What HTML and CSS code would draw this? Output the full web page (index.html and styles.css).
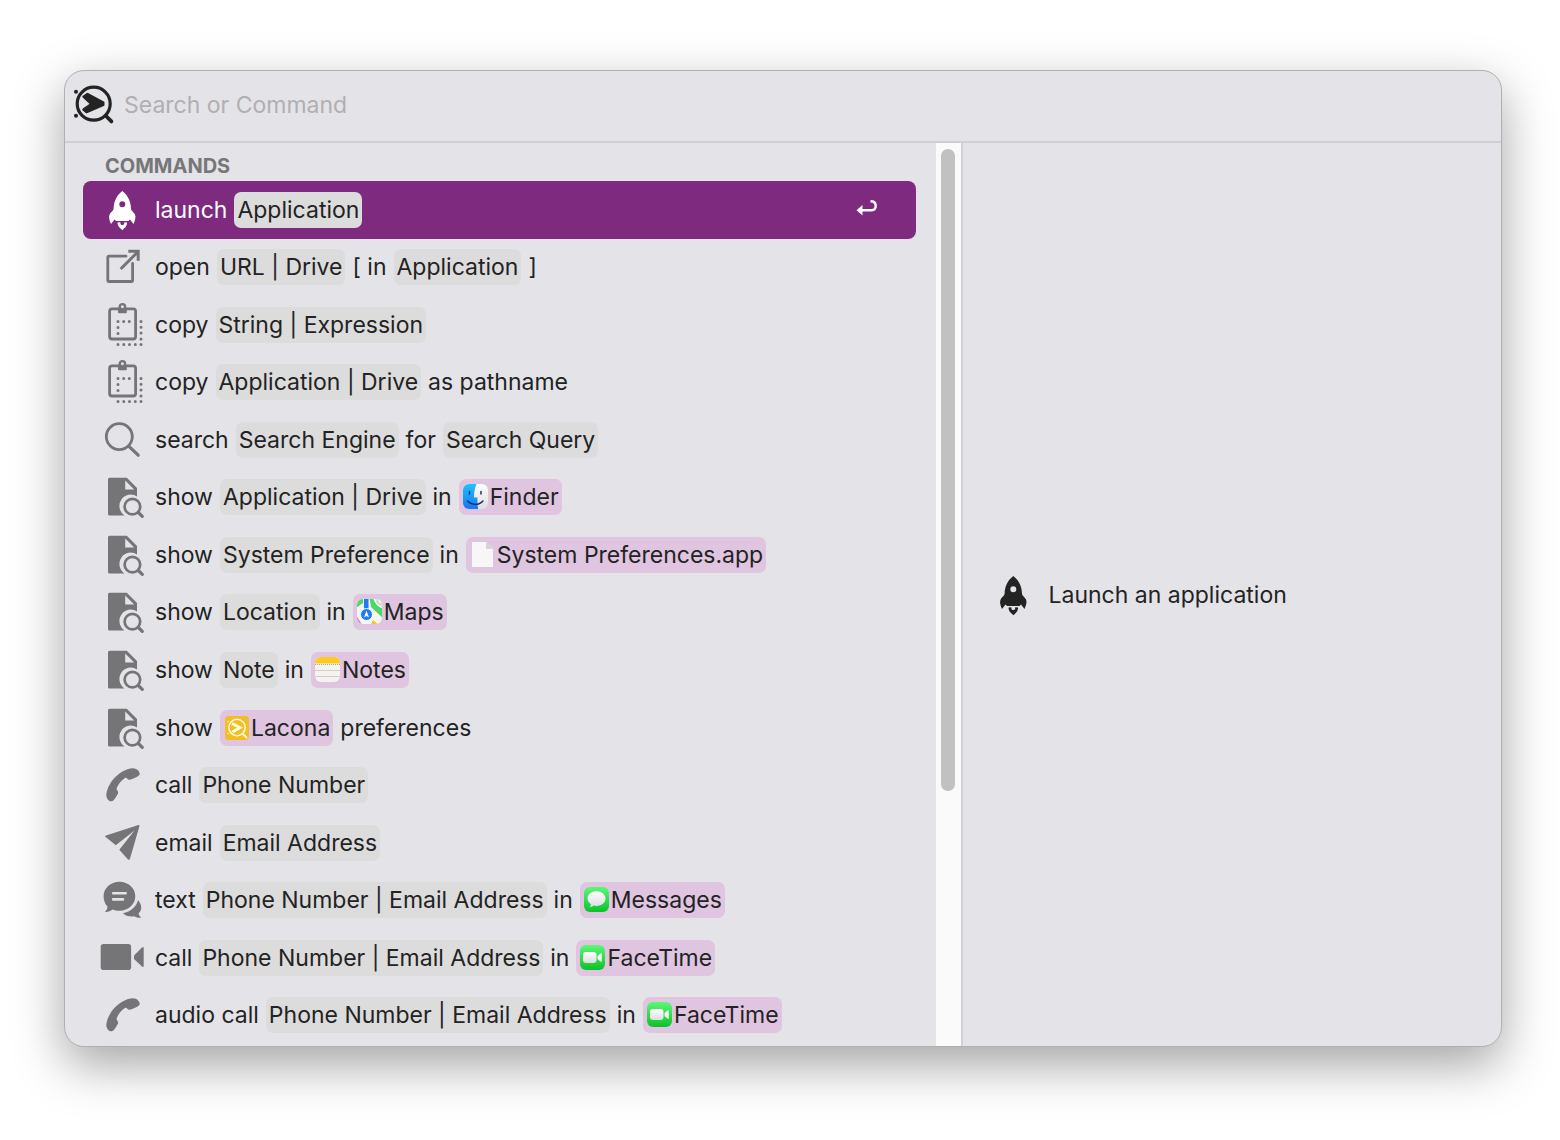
FILE: index.html
```html
<!DOCTYPE html>
<html lang="en">

<head>
  <meta charset="UTF-8">
  <meta name="viewport" content="width=device-width, initial-scale=1.0">
  <title>Lacona</title>
  <link rel="stylesheet" href="styles.css">
</head>

<body>
  <!-- icon definitions -->
  <svg class="sprite" aria-hidden="true">
    <defs>
      <linearGradient id="green" x1="0" y1="0" x2="0" y2="1">
        <stop offset="0" stop-color="#5df777" />
        <stop offset="1" stop-color="#0bc228" />
      </linearGradient>
      <linearGradient id="blue" x1="0" y1="0" x2="0" y2="1">
        <stop offset="0" stop-color="#1fc6fb" />
        <stop offset="1" stop-color="#1c6df2" />
      </linearGradient>
      <linearGradient id="white" x1="0" y1="0" x2="0" y2="1">
        <stop offset="0" stop-color="#ffffff" />
        <stop offset="1" stop-color="#dcdce0" />
      </linearGradient>
      <clipPath id="tile"><rect x="1" y="1" width="25" height="25" rx="6" /></clipPath>
    </defs>

    <symbol id="i-rocket" viewBox="0 0 46 46">
      <path fill="currentColor" fill-rule="evenodd" d="M23.3 4C27.8 7.5 31.8 13 32 21.5C32 24 34.5 24.5 36 27.5C37.2 30.5 36 33.5 34.5 37L31 32.5L29.5 34H17L15.6 32.5L12 37C10.5 33.5 9.4 30.5 10.6 27.5C12 24.5 14.6 24 14.6 21.5C14.8 13 18.8 7.5 23.3 4ZM23.3 14.3A3 3 0 1 0 23.3 20.3A3 3 0 1 0 23.3 14.3Z" />
      <path fill="currentColor" d="M18.5 35.6C18.5 39.5 21 41 23.3 43.2C25.6 41 28.1 39.5 28.1 35.6L25.3 35.2C25.3 37.2 24.6 38 23.3 38C22 38 21.3 37.2 21.3 35.2Z" />
    </symbol>
    <symbol id="i-open" viewBox="0 0 46 46">
      <path fill="none" stroke="currentColor" stroke-width="2.8" stroke-linecap="round" stroke-linejoin="round" d="M27 12.2H10Q8.8 12.2 8.8 13.4V36.3Q8.8 37.5 10 37.5H32.4Q33.6 37.5 33.6 36.3V19.5" />
      <path fill="none" stroke="currentColor" stroke-width="3" d="M21.7 25L39 7.7M29.3 7.3H39.2V16.8" />
    </symbol>
    <symbol id="i-clipboard" viewBox="0 0 46 46">
      <rect x="10.6" y="6.8" width="26" height="30.2" rx="2.5" fill="none" stroke="currentColor" stroke-width="2.8" />
      <rect x="19" y="5.8" width="8.8" height="5.4" rx="1" fill="currentColor" />
      <circle cx="23.4" cy="4.8" r="2.6" fill="none" stroke="currentColor" stroke-width="2.6" />
      <circle class="hole" cx="23.4" cy="4.8" r="1.4" />
      <path fill="none" stroke="currentColor" stroke-width="3" stroke-linecap="round" d="M19 19.5h.01M24.7 19.5h.01M30.3 19.5h.01M19 25.5h.01M19 31.5h.01M42 19.5h.01M42 25.3h.01M42 31.1h.01M42 36.9h.01M42 42.6h.01M19 42.6h.01M24.8 42.6h.01M30.5 42.6h.01M36.3 42.6h.01" />
    </symbol>
    <symbol id="i-search" viewBox="0 0 46 46">
      <circle cx="20.3" cy="19.6" r="13" fill="none" stroke="currentColor" stroke-width="2.8" />
      <path stroke="currentColor" stroke-width="3.2" stroke-linecap="round" d="M30 29.3L39.2 38.2" />
    </symbol>
    <symbol id="i-show" viewBox="0 0 46 46">
      <path fill="currentColor" fill-rule="evenodd" d="M10.5 3.8H27.8L38 14V22.5A11 11 0 0 0 25.5 41.4H10.5Q9 41.4 9 39.9V5.3Q9 3.8 10.5 3.8ZM26.2 6.5V15.5H35.2Z" />
      <circle cx="33.4" cy="32.6" r="7.8" fill="none" stroke="currentColor" stroke-width="2.7" />
      <path stroke="currentColor" stroke-width="3.2" stroke-linecap="round" d="M39.3 38.5L43.3 42.4" />
    </symbol>
    <symbol id="i-phone" viewBox="0 0 46 46">
      <path fill="currentColor" d="M40.5 12.8C41.5 10 38 6.2 34 6.2C27 6.5 18 11.5 12.5 19.5C8.5 25.5 7.3 30.5 7.3 33.5C7.6 37.5 11 40.3 13.6 39C15.5 37.5 17.8 34 19 31.4C19.8 29.5 17.5 28.5 17.6 26.6C19 22.5 22.3 18.3 26.2 15.8C28 15.2 28.5 18 30.5 17.8C34 17 38.5 15.2 40.5 12.8Z" />
    </symbol>
    <symbol id="i-email" viewBox="0 0 46 46">
      <path fill="currentColor" d="M6 16.5Q5.7 15.7 7 15.4L39.5 5Q40.8 4.8 40.4 6.2L30.9 39Q30.2 40.3 29 39.4L20.3 29.8L35.5 10.5L16.8 25.3Z" />
    </symbol>
    <symbol id="i-text" viewBox="0 0 46 46">
      <path fill="currentColor" d="M20.5 4.8C29.4 4.8 36.3 11.3 36.3 19.3C36.3 27.3 29.4 33.8 20.5 33.8C18 33.8 15.5 33.3 13.5 32.5C11 34.5 8.5 35.2 5.8 34.8C7.5 33.5 8.5 31.5 8.5 29.5C6 27 4.6 23.5 4.6 19.3C4.6 11.3 11.6 4.8 20.5 4.8Z" />
      <path class="knock" fill="none" stroke-width="2.6" stroke-linecap="round" d="M14.2 16.2H26.7M14.2 22.4H24" />
      <path fill="currentColor" d="M39 23C43 28 43.5 33 39.5 36.5Q40 39 42.2 40.5C39.5 41 37.5 40.5 35.5 39.2C31 40 27 39 24 36.2C31.5 34.8 37.5 29.8 39 23Z" />
    </symbol>
    <symbol id="i-video" viewBox="0 0 46 46">
      <rect x="1.7" y="9" width="30.4" height="26" rx="2.8" fill="currentColor" />
      <path fill="currentColor" d="M35 20.5L43 12.5Q44.7 11.3 44.7 13V31Q44.7 32.7 43 31.5L35 24Z" />
    </symbol>

    <!-- app tiles -->
    <symbol id="a-finder" viewBox="0 0 28 28">
      <g clip-path="url(#tile)">
        <rect width="28" height="28" fill="url(#white)" />
        <path fill="url(#blue)" d="M0 0H15C12.5 5 12 10 12 14.5H15.5C15.3 19 15.5 23 16.5 28H0Z" />
        <path fill="none" stroke="#17325c" stroke-width="1.5" stroke-linecap="round" d="M7.5 8.5V11M19 8.5V11M5.5 18C10 22.5 17 22.5 21 18" />
      </g>
    </symbol>
    <symbol id="a-file" viewBox="0 0 28 28">
      <path fill="#f7f7f8" d="M3 1H17L24 8V26H3Z" />
      <path fill="#d3d3d8" d="M17 1L24 8H17Z" />
    </symbol>
    <symbol id="a-maps" viewBox="0 0 28 28">
      <g clip-path="url(#tile)">
        <rect width="28" height="28" fill="#f5f5f2" />
        <path fill="#4bd863" d="M0 0H7V5L0 10ZM13.5 0H17L28 11V21L15 9Z" />
        <path fill="#d7d9d8" d="M19 0H28V9C24 8 20 5 19 0Z" />
        <path fill="none" stroke="#fff" stroke-width="1.5" d="M18 0Q20 8 28 10M22 0Q23 4 28 5" />
        <path fill="#d18bd0" d="M0 17L7 28H0Z" />
        <path fill="#f8c52c" d="M17 22L24 28H14Z" />
        <path fill="#1f7cf4" d="M8 0H12.5V12H8Z" />
        <circle cx="10.5" cy="16.5" r="6" fill="#1f7cf4" stroke="#fff" stroke-width="1" />
        <path fill="#fff" d="M10.5 12.8L13 19.5L10.5 18L8 19.5Z" />
      </g>
    </symbol>
    <symbol id="a-notes" viewBox="0 0 28 28">
      <g clip-path="url(#tile)">
        <rect width="28" height="28" fill="#f4f3ee" />
        <rect width="28" height="7.5" fill="#fbcb22" />
        <path stroke="#aaa69c" stroke-width="1" stroke-dasharray="1 1" d="M1 8.5H27" />
        <path stroke="#d0cfcb" stroke-width="1" d="M1 14.5H27M1 20.5H27" />
      </g>
    </symbol>
    <symbol id="a-lacona" viewBox="0 0 28 28">
      <rect x="2" y="2" width="24" height="24" rx="4" fill="#f3be24" />
      <g fill="none" stroke="#fffbe2">
        <circle cx="14" cy="13.5" r="8.2" stroke-width="1.5" />
        <path stroke-width="1.8" stroke-linecap="round" d="M20 20L23.5 23.5" />
        <path stroke-width="3" d="M9 9.5L17 13.5L9.5 18" />
        <path stroke-width="1.5" stroke-linecap="round" d="M5 7.5h.01M5 19.5h.01" />
      </g>
    </symbol>
    <symbol id="a-messages" viewBox="0 0 28 28">
      <rect x="1" y="1" width="25" height="25" rx="6" fill="url(#green)" />
      <path fill="url(#white)" d="M13.5 5.2C18.5 5.2 22.5 8.4 22.5 12.6C22.5 16.8 18.5 20 13.5 20C12.5 20 11.5 19.9 10.6 19.6C9.5 20.6 8 21.2 6.5 21.2C7.4 20.3 7.9 19.2 7.9 18.2C5.8 16.9 4.5 14.9 4.5 12.6C4.5 8.4 8.5 5.2 13.5 5.2Z" />
    </symbol>
    <symbol id="a-facetime" viewBox="0 0 28 28">
      <rect x="1" y="1" width="25" height="25" rx="6" fill="url(#green)" />
      <rect x="4" y="8" width="13.5" height="11" rx="3" fill="url(#white)" />
      <path fill="#f4f4f4" d="M18.5 12L21.8 9.3Q22.8 8.7 22.8 10V17Q22.8 18.3 21.8 17.7L18.5 15Z" />
    </symbol>
  </svg>

  <main class="window">
    <header class="search-bar">
      <svg class="logo" viewBox="0 0 44 44" aria-hidden="true">
        <circle cx="21.7" cy="20.7" r="16.5" fill="none" stroke="currentColor" stroke-width="3.2" />
        <path stroke="currentColor" stroke-width="3.8" stroke-linecap="round" d="M34 33L39.4 38.4" />
        <path fill="currentColor" stroke="currentColor" stroke-width="2.4" stroke-linejoin="round" d="M11.5 13.7L15.5 11L31.3 19.5V22L14.5 29.2L11.5 26.5L19.5 21Z" />
        <circle cx="4" cy="8.7" r="2" fill="currentColor" />
        <circle cx="4" cy="32.7" r="2" fill="currentColor" />
      </svg>
      <input type="text" id="search" placeholder="Search or Command" aria-label="Search or Command">
    </header>

    <div class="content">
      <section class="results">
        <div class="results-list">
          <h2>COMMANDS</h2>
          <ul>
            <li><button type="button" class="command selected">
              <svg class="icon"><use href="#i-rocket" /></svg>
              <span>launch</span><span class="arg">Application</span>
              <svg class="return" viewBox="0 0 22 22">
                <path fill="none" stroke="currentColor" stroke-width="2.4" d="M5 11.2H15.5C18 11.2 19.7 9.5 19.7 6.8C19.7 4 18 2.2 14.5 2.2" />
                <path fill="currentColor" d="M0.5 11.2L6.5 6V16.4Z" />
              </svg>
            </button></li>
            <li><button type="button" class="command">
              <svg class="icon"><use href="#i-open" /></svg>
              <span>open</span><span class="arg">URL | Drive</span><span>[ in</span><span class="arg">Application</span><span>]</span>
            </button></li>
            <li><button type="button" class="command">
              <svg class="icon"><use href="#i-clipboard" /></svg>
              <span>copy</span><span class="arg">String | Expression</span>
            </button></li>
            <li><button type="button" class="command">
              <svg class="icon"><use href="#i-clipboard" /></svg>
              <span>copy</span><span class="arg">Application | Drive</span><span>as pathname</span>
            </button></li>
            <li><button type="button" class="command">
              <svg class="icon"><use href="#i-search" /></svg>
              <span>search</span><span class="arg">Search Engine</span><span>for</span><span class="arg">Search Query</span>
            </button></li>
            <li><button type="button" class="command">
              <svg class="icon"><use href="#i-show" /></svg>
              <span>show</span><span class="arg">Application | Drive</span><span>in</span><span class="arg app"><svg><use href="#a-finder" /></svg>Finder</span>
            </button></li>
            <li><button type="button" class="command">
              <svg class="icon"><use href="#i-show" /></svg>
              <span>show</span><span class="arg">System Preference</span><span>in</span><span class="arg app"><svg><use href="#a-file" /></svg>System Preferences.app</span>
            </button></li>
            <li><button type="button" class="command">
              <svg class="icon"><use href="#i-show" /></svg>
              <span>show</span><span class="arg">Location</span><span>in</span><span class="arg app"><svg><use href="#a-maps" /></svg>Maps</span>
            </button></li>
            <li><button type="button" class="command">
              <svg class="icon"><use href="#i-show" /></svg>
              <span>show</span><span class="arg">Note</span><span>in</span><span class="arg app"><svg><use href="#a-notes" /></svg>Notes</span>
            </button></li>
            <li><button type="button" class="command">
              <svg class="icon"><use href="#i-show" /></svg>
              <span>show</span><span class="arg app"><svg><use href="#a-lacona" /></svg>Lacona</span><span>preferences</span>
            </button></li>
            <li><button type="button" class="command">
              <svg class="icon"><use href="#i-phone" /></svg>
              <span>call</span><span class="arg">Phone Number</span>
            </button></li>
            <li><button type="button" class="command">
              <svg class="icon"><use href="#i-email" /></svg>
              <span>email</span><span class="arg">Email Address</span>
            </button></li>
            <li><button type="button" class="command">
              <svg class="icon"><use href="#i-text" /></svg>
              <span>text</span><span class="arg">Phone Number | Email Address</span><span>in</span><span class="arg app"><svg><use href="#a-messages" /></svg>Messages</span>
            </button></li>
            <li><button type="button" class="command">
              <svg class="icon"><use href="#i-video" /></svg>
              <span>call</span><span class="arg">Phone Number | Email Address</span><span>in</span><span class="arg app"><svg><use href="#a-facetime" /></svg>FaceTime</span>
            </button></li>
            <li><button type="button" class="command">
              <svg class="icon"><use href="#i-phone" /></svg>
              <span>audio call</span><span class="arg">Phone Number | Email Address</span><span>in</span><span class="arg app"><svg><use href="#a-facetime" /></svg>FaceTime</span>
            </button></li>
          </ul>
        </div>
        <div class="scrollbar"><div class="thumb"></div></div>
      </section>

      <aside class="preview">
        <svg class="icon"><use href="#i-rocket" /></svg>
        <span>Launch an application</span>
      </aside>
    </div>
  </main>
</body>

</html>
```

FILE: styles.css
```css
* {
  box-sizing: border-box;
}

body {
  margin: 0;
  padding: 70px 58px 93px 64px;
  min-height: 100vh;
  display: flex;
  background: #fff;
  color: #232323;
  font-family: Inter, "Liberation Sans", sans-serif;
  font-size: 23px;
  line-height: 28px;
}

.sprite {
  position: absolute;
  width: 0;
  height: 0;
}

.window {
  flex: 1;
  display: flex;
  flex-direction: column;
  background: #e4e3e8;
  border: 1px solid #b0b0b2;
  border-radius: 20px;
  overflow: hidden;
  box-shadow: 0 18px 50px rgba(0, 0, 0, 0.36);
}

.search-bar {
  display: flex;
  align-items: center;
  gap: 8px;
  height: 72px;
  padding: 0 7px 2px;
  border-bottom: 2px solid #cfced1;
}

.logo {
  flex: none;
  width: 44px;
  height: 44px;
}

.search-bar input {
  flex: 1;
  padding: 0;
  border: 0;
  outline: 0;
  background: none;
  color: inherit;
  font: inherit;
}

.search-bar input::placeholder {
  color: #b0afb2;
}

.content {
  flex: 1;
  display: grid;
  grid-template-columns: 5fr 3fr;
}

.results {
  display: flex;
  border-right: 2px solid #d2d1d4;
}

.results-list {
  flex: 1;
  display: flex;
  flex-direction: column;
  padding: 8px 20px 2px 18px;
}

h2 {
  margin: 0;
  padding-left: 22px;
  color: #777679;
  font-size: 20px;
  line-height: 30px;
  font-weight: 700;
}

ul {
  flex: 1;
  display: flex;
  flex-direction: column;
  margin: 0;
  padding: 0;
  list-style: none;
}

li {
  flex: 1;
  display: flex;
}

.command {
  flex: 1;
  display: flex;
  align-items: center;
  gap: 7px;
  padding: 0 38px 0 16px;
  border: 0;
  border-radius: 8px;
  background: none;
  color: inherit;
  font: inherit;
  text-align: left;
  white-space: nowrap;
}

.command.selected {
  background: #7e2a7e;
  color: #fff;
}

.icon {
  flex: none;
  width: 46px;
  height: 46px;
}

.command .icon {
  margin-right: 3px;
  color: #757477;
}

.command.selected .icon {
  color: #fff;
}

.knock {
  stroke: #e4e3e8;
}

.hole {
  fill: #e4e3e8;
}

.return {
  width: 22px;
  height: 22px;
  margin-left: auto;
}

.arg {
  display: flex;
  align-items: center;
  height: 36px;
  padding: 0 3px;
  border-radius: 7px;
  background: #dcdcdc;
  color: #232323;
}

.arg.app {
  background: #dfc5e0;
}

.arg svg {
  width: 28px;
  height: 28px;
}

.scrollbar {
  width: 25px;
  padding: 6px 6px 6px 5px;
  background: #fafafa;
}

.thumb {
  height: 72%;
  border-radius: 7px;
  background: #c1c1c1;
}

.preview {
  display: flex;
  align-items: center;
  gap: 13px;
  padding-left: 27px;
}
```
